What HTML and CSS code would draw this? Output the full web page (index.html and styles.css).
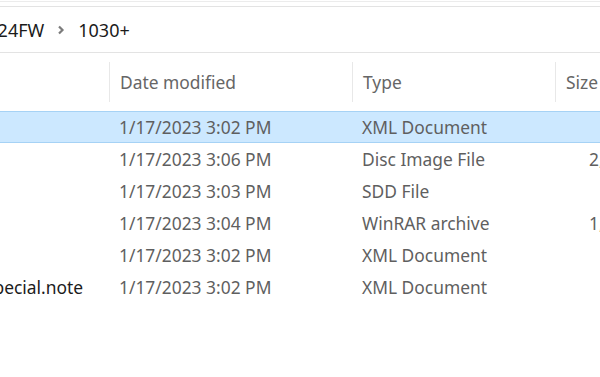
FILE: index.html
```html
<!DOCTYPE html>
<html lang="en">
<head>
  <meta charset="UTF-8" />
  <title>1030+ - File Explorer</title>
  <link rel="stylesheet" href="styles.css">
</head>
<body>
  <div class="toolbar-edge"></div>

  <div class="breadcrumb">
    <span class="crumb">2024FW</span>
    <svg class="chevron" width="10" height="12" viewBox="0 0 10 12">
      <path d="M3 2.5 L6.5 6 L3 9.5" fill="none" stroke="#7c7c7c" stroke-width="2.2" />
    </svg>
    <span class="crumb">1030+</span>
  </div>

  <div class="files">
    <div class="row header">
      <div class="cell name">Name</div>
      <div class="cell date">Date modified</div>
      <div class="cell type">Type</div>
      <div class="cell size">Size</div>
    </div>

    <div class="row selected">
      <div class="cell name">config.xml</div>
      <div class="cell date">1/17/2023 3:02 PM</div>
      <div class="cell type">XML Document</div>
      <div class="cell size"></div>
    </div>
    <div class="row">
      <div class="cell name">firmware.img</div>
      <div class="cell date">1/17/2023 3:06 PM</div>
      <div class="cell type">Disc Image File</div>
      <div class="cell size">2,048 KB</div>
    </div>
    <div class="row">
      <div class="cell name">layout.sdd</div>
      <div class="cell date">1/17/2023 3:03 PM</div>
      <div class="cell type">SDD File</div>
      <div class="cell size"></div>
    </div>
    <div class="row">
      <div class="cell name">backup.rar</div>
      <div class="cell date">1/17/2023 3:04 PM</div>
      <div class="cell type">WinRAR archive</div>
      <div class="cell size">1,536 KB</div>
    </div>
    <div class="row">
      <div class="cell name">menu.xml</div>
      <div class="cell date">1/17/2023 3:02 PM</div>
      <div class="cell type">XML Document</div>
      <div class="cell size"></div>
    </div>
    <div class="row">
      <div class="cell name">1030_settings_special.note</div>
      <div class="cell date">1/17/2023 3:02 PM</div>
      <div class="cell type">XML Document</div>
      <div class="cell size"></div>
    </div>
  </div>
</body>
</html>
```

FILE: styles.css
```css
body {
  margin: 0;
  overflow: hidden;
  background: #fff;
  font-family: 'Noto Sans', 'Open Sans', sans-serif;
  color: #1b1b1b;
}
.toolbar-edge {
  height: 1px;
  margin-top: 1px;
  border-bottom: 4px solid #fff;
  background: #ececec;
}
.breadcrumb {
  display: flex;
  align-items: center;
  height: 45px;
  border-top: 1px solid #e3e3e3;
  border-bottom: 1px solid #e3e3e3;
  margin-left: -23px;
  font-size: 18px;
  gap: 6px;
}
.breadcrumb .chevron {
  margin: 0 6px;
}
.files {
  margin-left: -200px;
  font-size: 17.4px;
}
.row {
  display: grid;
  grid-template-columns: 309px 243px 203px 160px;
  height: 32px;
  align-items: center;
  box-sizing: border-box;
}
.row .cell {
  padding-left: 10px;
  white-space: nowrap;
  overflow: hidden;
}
.row .name {
  padding-left: 65px;
}
.row .date,
.row .type {
  color: #5f5f5f;
}
.row .size {
  color: #5f5f5f;
  padding-left: 34px;
}
.header {
  height: 58px;
}
.header .cell {
  color: #666;
  height: 40px;
  line-height: 40px;
  border-left: 1px solid #e8e8e8;
}
.header .name {
  border-left: none;
}
.header .size {
  padding-left: 10px;
}
.selected {
  background: #cce8ff;
  border-top: 1px solid #a6d2f5;
  border-bottom: 1px solid #a6d2f5;
}
```
